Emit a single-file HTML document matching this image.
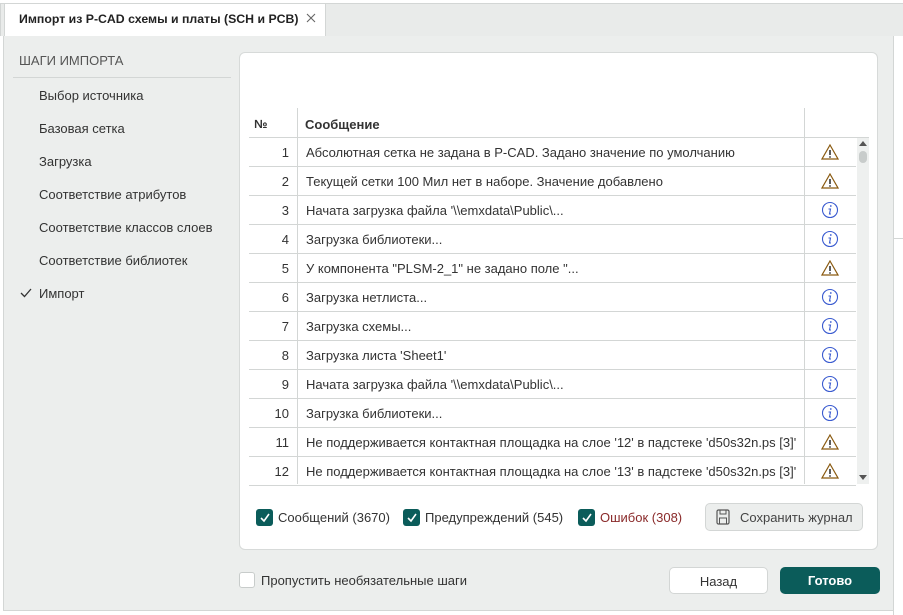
<!DOCTYPE html>
<html><head><meta charset="utf-8"><style>
*{box-sizing:border-box;margin:0;padding:0}
body{width:903px;height:615px;overflow:hidden;background:#fff;font-family:"Liberation Sans",sans-serif;font-size:13px;color:#333;position:relative}
.abs{position:absolute}
.tabbar{left:0;top:3px;width:903px;height:33px;background:#e9ebea;border-top:1px solid #d3d6d5;border-left:1px solid #d3d6d5}
.tab{left:4px;top:3px;width:322px;height:33px;background:#fff;border:1px solid #d3d6d5;border-bottom:none;font-weight:bold;font-size:12.3px;padding:8px 0 0 14px;color:#222;white-space:nowrap}
.content{left:3px;top:36px;width:890px;height:575px;background:#eceeed;border-left:1px solid #d3d6d5;border-bottom:1px solid #d3d6d5}
.side{left:19px;font-size:13px;color:#333}
.panel{left:239px;top:52px;width:639px;height:498px;background:#fff;border:1px solid #d7dad9;border-radius:6px}
.row{left:249px;width:607px;height:29px;border-bottom:1px solid #d3d6d5;font-size:13px}
.row .n{position:absolute;left:0;width:40px;text-align:right;top:7px}
.row .m{position:absolute;left:57px;top:7px;white-space:nowrap}
.vl{width:1px;background:#d3d6d5}
.cb{width:17px;height:17px;background:#0b5c5a;border-radius:3px}
.cb svg{position:absolute;left:2px;top:2px}
</style></head><body>
<div class="abs tabbar"></div>
<div class="abs tab">Импорт из P-CAD схемы и платы (SCH и PCB)</div>
<svg class="abs" style="left:306px;top:13px" width="10" height="10"><path d="M1 1L9 9M9 1L1 9" stroke="#666" stroke-width="1.1"/></svg>
<div class="abs" style="left:893px;top:36px;width:10px;height:579px;background:#fff;border-left:1px solid #d3d6d5"></div>
<div class="abs" style="left:893px;top:238px;width:10px;height:1px;background:#d3d6d5"></div>
<div class="abs content"></div>
<div class="abs side" style="top:53px;color:#555">ШАГИ ИМПОРТА</div>
<div class="abs" style="left:13px;top:77px;width:218px;height:1px;background:#d3d6d5"></div>
<div class="abs side" style="left:39px;top:88px">Выбор источника</div>
<div class="abs side" style="left:39px;top:121px">Базовая сетка</div>
<div class="abs side" style="left:39px;top:154px">Загрузка</div>
<div class="abs side" style="left:39px;top:187px">Соответствие атрибутов</div>
<div class="abs side" style="left:39px;top:220px">Соответствие классов слоев</div>
<div class="abs side" style="left:39px;top:253px">Соответствие библиотек</div>
<div class="abs side" style="left:39px;top:286px">Импорт</div>
<svg class="abs" style="left:20px;top:288px" width="12" height="10"><path d="M1 5l3.5 3.5L11 1" stroke="#333" stroke-width="1.3" fill="none"/></svg>
<div class="abs panel"></div>
<div class="abs" style="left:254px;top:117px;font-weight:bold;font-size:12px">№</div>
<div class="abs" style="left:305px;top:117px;font-weight:bold;font-size:13px">Сообщение</div>
<div class="abs" style="left:249px;top:137px;width:620px;height:1px;background:#d3d6d5"></div>
<div class="abs vl" style="left:297px;top:108px;height:376px"></div>
<div class="abs vl" style="left:804px;top:108px;height:376px"></div>
<div id="rows"></div>
<div class="abs" style="left:857px;top:138px;width:12px;height:346px;background:#eef0ef"></div>
<div class="abs" style="left:859px;top:151px;width:8px;height:12px;background:#c8cccb;border-radius:4px"></div>
<svg class="abs" style="left:859px;top:141px" width="8" height="5"><path d="M0 5L4 0L8 5Z" fill="#555"/></svg>
<svg class="abs" style="left:859px;top:475px" width="8" height="5"><path d="M0 0L4 5L8 0Z" fill="#555"/></svg>
<div class="abs cb" style="left:256px;top:509px"><svg width="13" height="13"><path d="M3 7l3 3 5-7" stroke="#fff" stroke-width="1.6" fill="none"/></svg></div>
<div class="abs" style="left:278px;top:510px">Сообщений (3670)</div>
<div class="abs cb" style="left:403px;top:509px"><svg width="13" height="13"><path d="M3 7l3 3 5-7" stroke="#fff" stroke-width="1.6" fill="none"/></svg></div>
<div class="abs" style="left:425px;top:510px">Предупреждений (545)</div>
<div class="abs cb" style="left:578px;top:509px"><svg width="13" height="13"><path d="M3 7l3 3 5-7" stroke="#fff" stroke-width="1.6" fill="none"/></svg></div>
<div class="abs" style="left:600px;top:510px;color:#8a2a2a">Ошибок (308)</div>
<div class="abs" style="left:705px;top:503px;width:158px;height:28px;background:#eceeed;border:1px solid #d3d6d5;border-radius:5px;padding:6px 0 0 34px;color:#444">Сохранить журнал</div>
<svg class="abs" style="left:716px;top:509px" width="14" height="16"><rect x="1" y="1" width="12" height="14" rx="1.5" fill="none" stroke="#555" stroke-width="1.2"/><rect x="4" y="1" width="6" height="4" fill="none" stroke="#555"/><rect x="3.5" y="9" width="7" height="6" fill="none" stroke="#555"/></svg>
<div class="abs" style="left:239px;top:572px;width:16px;height:16px;background:#fff;border:1px solid #c8cccb;border-radius:3px"></div>
<div class="abs" style="left:261px;top:573px">Пропустить необязательные шаги</div>
<div class="abs" style="left:669px;top:567px;width:99px;height:27px;background:#fff;border:1px solid #d3d6d5;border-radius:5px;text-align:center;padding-top:6px">Назад</div>
<div class="abs" style="left:780px;top:567px;width:100px;height:27px;background:#0b5c5a;border-radius:5px;text-align:center;padding-top:6px;color:#fff;font-weight:bold">Готово</div>
<script>
var d=[["Абсолютная сетка не задана в P-CAD. Задано значение по умолчанию","w"],["Текущей сетки 100 Мил нет в наборе. Значение добавлено","w"],["Начата загрузка файла '\\\\emxdata\\Public\\...","i"],["Загрузка библиотеки...","i"],["У компонента \"PLSM-2_1\" не задано поле \"...","w"],["Загрузка нетлиста...","i"],["Загрузка схемы...","i"],["Загрузка листа 'Sheet1'","i"],["Начата загрузка файла '\\\\emxdata\\Public\\...","i"],["Загрузка библиотеки...","i"],["Не поддерживается контактная площадка на слое '12' в падстеке 'd50s32n.ps [3]'","w"],["Не поддерживается контактная площадка на слое '13' в падстеке 'd50s32n.ps [3]'","w"]];
var h="";
var W='<svg width="18" height="16"><path d="M9 1L17 15H1Z" fill="none" stroke="#8a5a10" stroke-width="1.2"/><path d="M9 6v5" stroke="#333" stroke-width="1.6"/><circle cx="9" cy="13" r="0.9" fill="#333"/></svg>';
var I='<svg width="18" height="18"><circle cx="9" cy="9" r="7.5" fill="none" stroke="#3a5bd0" stroke-width="1.1"/><circle cx="9.8" cy="5" r="0.9" fill="#3a5bd0"/><path d="M7.5 8h2l-1 5h1.5" fill="none" stroke="#3a5bd0" stroke-width="1.1"/></svg>';
d.forEach(function(r,k){var t=138+k*29;h+='<div class="abs row" style="top:'+t+'px"><span class="n">'+(k+1)+'</span><span class="m">'+r[0].replace(/</g,"&lt;")+'</span><span style="position:absolute;left:572px;top:'+(r[1]=="w"?6:5)+'px">'+(r[1]=="w"?W:I)+'</span></div>';});
document.getElementById("rows").innerHTML=h;
</script>
</body></html>
